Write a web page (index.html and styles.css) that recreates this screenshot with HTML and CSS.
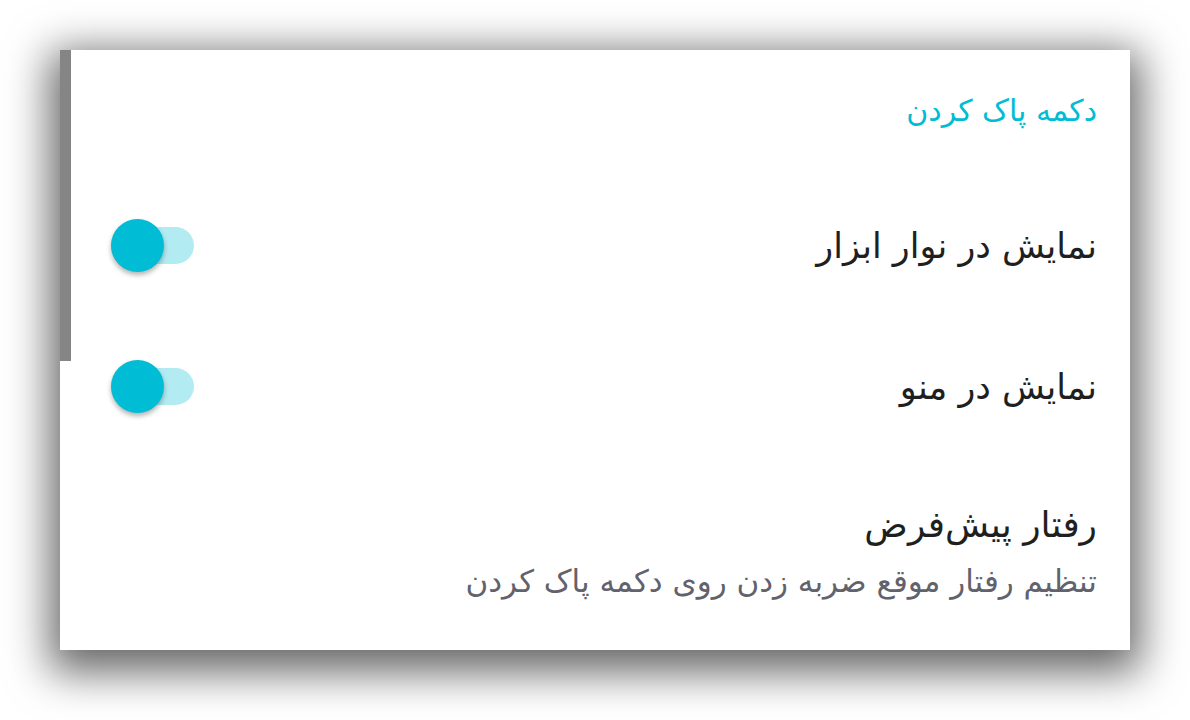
FILE: index.html
```html
<!DOCTYPE html>
<html lang="fa" dir="rtl">
<head>
<meta charset="utf-8">
<link rel="stylesheet" href="styles.css">
</head>
<body>
<div class="card">
  <div class="scrollbar"></div>
  <div class="category">دکمه پاک کردن</div>
  <div class="row">
    <div class="title">نمایش در نوار ابزار</div>
    <div class="switch"><div class="track"></div><div class="thumb"></div></div>
  </div>
  <div class="row">
    <div class="title">نمایش در منو</div>
    <div class="switch"><div class="track"></div><div class="thumb"></div></div>
  </div>
  <div class="row tall">
    <div class="texts">
      <div class="title">رفتار پیش‌فرض</div>
      <div class="summary">تنظیم رفتار موقع ضربه زدن روی دکمه پاک کردن</div>
    </div>
  </div>
</div>
</body>
</html>
```
FILE: styles.css
```css
html, body {
  margin: 0;
  padding: 0;
  background: #ffffff;
  overflow: hidden;
}
body {
  width: 1190px;
  height: 720px;
  font-family: "DejaVu Sans", sans-serif;
}
.card {
  position: relative;
  margin: 50px 60px 0 60px;
  width: 1070px;
  height: 600px;
  background: #ffffff;
  box-shadow: 0 12px 40px 10px rgba(0, 0, 0, 0.6);
  display: flex;
  flex-direction: column;
  padding: 0 33px 0 51px;
  box-sizing: border-box;
}
.scrollbar {
  position: absolute;
  left: 0;
  top: 0;
  width: 11px;
  height: 311px;
  background: #858585;
}
.category {
  color: #00bcd4;
  font-size: 30px;
  height: 125px;
  line-height: 122px;
}
.row {
  display: flex;
  align-items: center;
  justify-content: space-between;
  height: 141px;
  flex-shrink: 0;
}
.row.tall {
  height: 150px;
  align-items: flex-start;
  padding-top: 47px;
  box-sizing: border-box;
}
.title {
  font-size: 35px;
  line-height: 42px;
  color: #1f1f1f;
}
.row.tall .title {
  font-size: 36px;
}
.summary {
  font-size: 31px;
  line-height: 38px;
  color: #62626c;
  margin-top: 16px;
}
.switch {
  position: relative;
  width: 83px;
  height: 53px;
}
.track {
  position: absolute;
  left: 0;
  top: 8px;
  width: 83px;
  height: 37px;
  border-radius: 19px;
  background: #b2ebf2;
}
.thumb {
  position: absolute;
  left: 0;
  top: 0;
  width: 53px;
  height: 53px;
  border-radius: 50%;
  background: #00bcd4;
  box-shadow: 0 3px 5px rgba(0, 0, 0, 0.3);
}
```
